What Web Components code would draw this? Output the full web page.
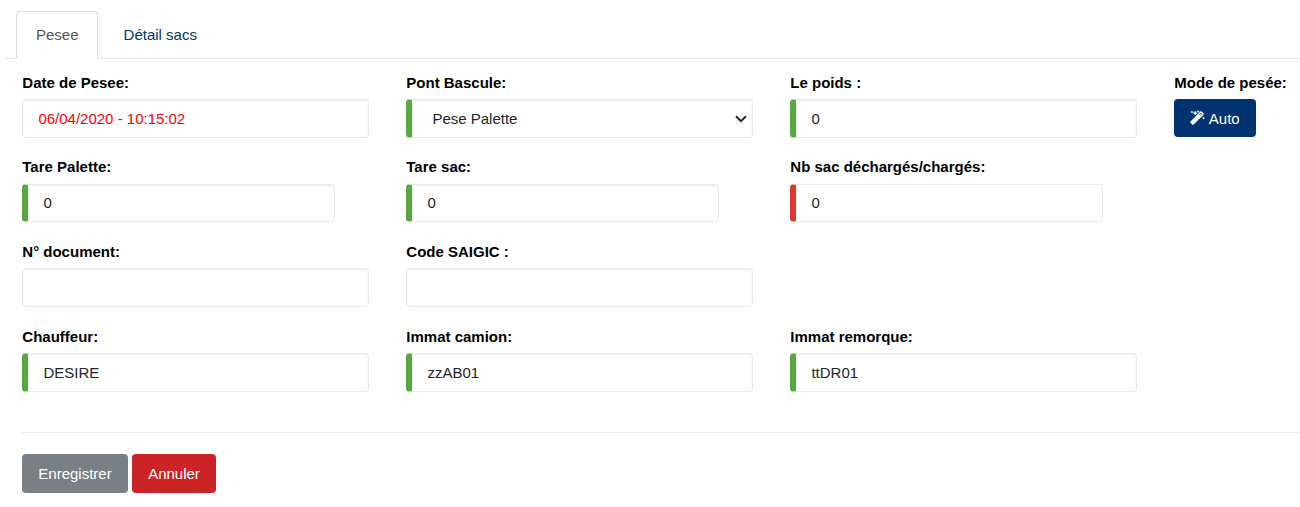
<!DOCTYPE html>
<html lang="fr">
<head>
<meta charset="utf-8">
<title>Pesee</title>
<style>
  html, body { margin: 0; background: #fff; overflow: hidden; }
  body { font: 15px/22px "Liberation Sans", Arial, sans-serif; color: #212529; }
</style>
</head>
<body>
<pesee-page></pesee-page>
<script>
const define = (name, html) => {
  const template = document.createElement('template');
  template.innerHTML = html;
  customElements.define(name, class extends HTMLElement {
    constructor() {
      super();
      this.attachShadow({ mode: 'open' }).append(template.content.cloneNode(true));
    }
  });
};

define('nav-tab', `
<style>
  :host { display: block; box-sizing: border-box; height: 48px; padding: 12px 19px 0; margin-right: 5.6px;
    border: 1px solid transparent; border-radius: 4px 4px 0 0; color: #003471; white-space: nowrap; }
  :host([active]) { width: 82px; color: #555; border-color: #ddd #ddd #fff; background: #fff; }
</style><slot></slot>`);

define('nav-tabs', `
<style>
  :host { display: flex; box-sizing: border-box; height: 48px; margin: 11px 0 0 3px; padding-left: 13px;
    box-shadow: inset 0 -1px #e6e6e6; }
</style><slot></slot>`);

define('form-field', `
<style>
  :host { display: block; width: 347px; --box-height: 39px; --box-pad: 8px; }
  :host([narrow]) { width: 313px; --box-height: 38px; --box-pad: 7px; }
  :host([auto]) { width: auto; --box-height: 38px; }
  .label { height: 22px; margin-bottom: 5px; padding-left: .3px; font-weight: bold; color: #000; white-space: nowrap; }
  :host([narrow]) .label { margin: -1px 0 6px; }
</style>
<div class="label"><slot name="label"></slot></div><slot></slot>`);

define('text-box', `
<style>
  :host { display: block; box-sizing: border-box; height: var(--box-height); padding: var(--box-pad) 15.4px 0;
    border: 1px solid #e9e9e9; border-radius: 4px; background: #fff; box-shadow: inset 0 1px 2px rgba(0,0,0,.07); }
  :host([state]) { border-left: 6px solid #57a83f; }
  :host([state=error]) { border-left-color: #df3831; box-shadow: none; }
  :host([date]) { color: #f00; }
</style><slot></slot>`);

define('select-box', `
<style>
  :host { display: flex; align-items: center; justify-content: space-between; box-sizing: border-box; height: 39px;
    padding: 0 5px 0 20.4px; border: 1px solid #e9e9e9; border-left: 6px solid #57a83f; border-radius: 4px;
    background: #fff; box-shadow: inset 0 1px 2px rgba(0,0,0,.07); }
</style><slot></slot>
<svg width="12" height="8" viewBox="0 0 12 8" fill="none" stroke="#212529" stroke-width="2"><path d="M1 1.2 6 6.2 11 1.2"/></svg>`);

define('action-button', `
<style>
  :host { display: inline-flex; align-items: center; justify-content: center; box-sizing: border-box; height: 38px; width: 82px;
    padding-top: 1px; border-radius: 4px; background: #003471; color: #fff; font-size: 15px; white-space: nowrap; }
  :host([kind]) { height: 39px; padding-top: 0; }
  :host([kind=secondary]) { width: 106px; background: #7a7f86; }
  :host([kind=danger]) { width: 84px; background: #cb2326; }
</style><slot></slot>`);

define('magic-icon', `
<style>:host { display: block; width: 15px; height: 15px; margin: -2px 3.6px 0 0; } svg { display: block; }</style>
<svg width="15" height="15" viewBox="0 0 15 15">
  <path fill="#fff" d="M.5 11.5 10.3 1.5Q11 .8 11.7 1.5L13.5 3.2Q14.2 4 13.5 4.7L3.7 14.4Q3 15 2.3 14.4L.5 12.8Q-.1 12.1.5 11.5Z"/>
  <path fill="#003471" d="M9.2 4.6 11 2.8 12.2 4 10.4 5.8Z"/>
  <path fill="#fff" d="m9.9 4.6 1.2-1.2.6.6-1.2 1.2Z"/>
  <path fill="#fff" d="m2 .5.5 1.1 1.1.5-1.1.5L2 3.7l-.5-1.1-1.1-.5 1.1-.5ZM5.2.6 6 2.3l1.7.8L6 3.9l-.8 1.7-.8-1.7-1.7-.8 1.7-.8ZM8.1 0l.5 1.1 1.1.5-1.1.5-.5 1.1-.5-1.1-1.1-.5 1.1-.5ZM13.5 6.5l.5 1.1 1.1.5-1.1.5-.5 1.1-.5-1.1-1.1-.5 1.1-.5Z"/>
</svg>`);

define('pesee-page', `
<style>
  :host { display: block; width: 1300px; height: 507px; overflow: hidden; }
  .fields { display: grid; grid-template-columns: 384px 384px 384px 126px; grid-template-rows: 66px 65px 66px 66px; row-gap: 19px;
    padding: 13px 0 0 22px; }
  .first { grid-column: 1; }
  .line { height: 1px; margin: 40px 0 21px 22px; background: #ebebeb; }
  .buttons { display: flex; gap: 4px; padding-left: 22px; }
</style>
<nav-tabs><nav-tab active>Pesee</nav-tab><nav-tab>Détail sacs</nav-tab></nav-tabs>
<div class="fields">
  <form-field><span slot="label">Date de Pesee:</span><text-box date>06/04/2020 - 10:15:02</text-box></form-field>
  <form-field><span slot="label">Pont Bascule:</span><select-box>Pese Palette</select-box></form-field>
  <form-field><span slot="label">Le poids :</span><text-box state="ok">0</text-box></form-field>
  <form-field auto><span slot="label">Mode de pesée:</span><action-button><magic-icon></magic-icon>Auto</action-button></form-field>
  <form-field narrow class="first"><span slot="label">Tare Palette:</span><text-box state="ok">0</text-box></form-field>
  <form-field narrow><span slot="label">Tare sac:</span><text-box state="ok">0</text-box></form-field>
  <form-field narrow><span slot="label">Nb sac déchargés/chargés:</span><text-box state="error">0</text-box></form-field>
  <form-field class="first"><span slot="label">N° document:</span><text-box></text-box></form-field>
  <form-field><span slot="label">Code SAIGIC :</span><text-box></text-box></form-field>
  <form-field class="first"><span slot="label">Chauffeur:</span><text-box state="ok">DESIRE</text-box></form-field>
  <form-field><span slot="label">Immat camion:</span><text-box state="ok">zzAB01</text-box></form-field>
  <form-field><span slot="label">Immat remorque:</span><text-box state="ok">ttDR01</text-box></form-field>
</div>
<div class="line"></div>
<div class="buttons"><action-button kind="secondary">Enregistrer</action-button><action-button kind="danger">Annuler</action-button></div>`);
</script>
</body>
</html>
